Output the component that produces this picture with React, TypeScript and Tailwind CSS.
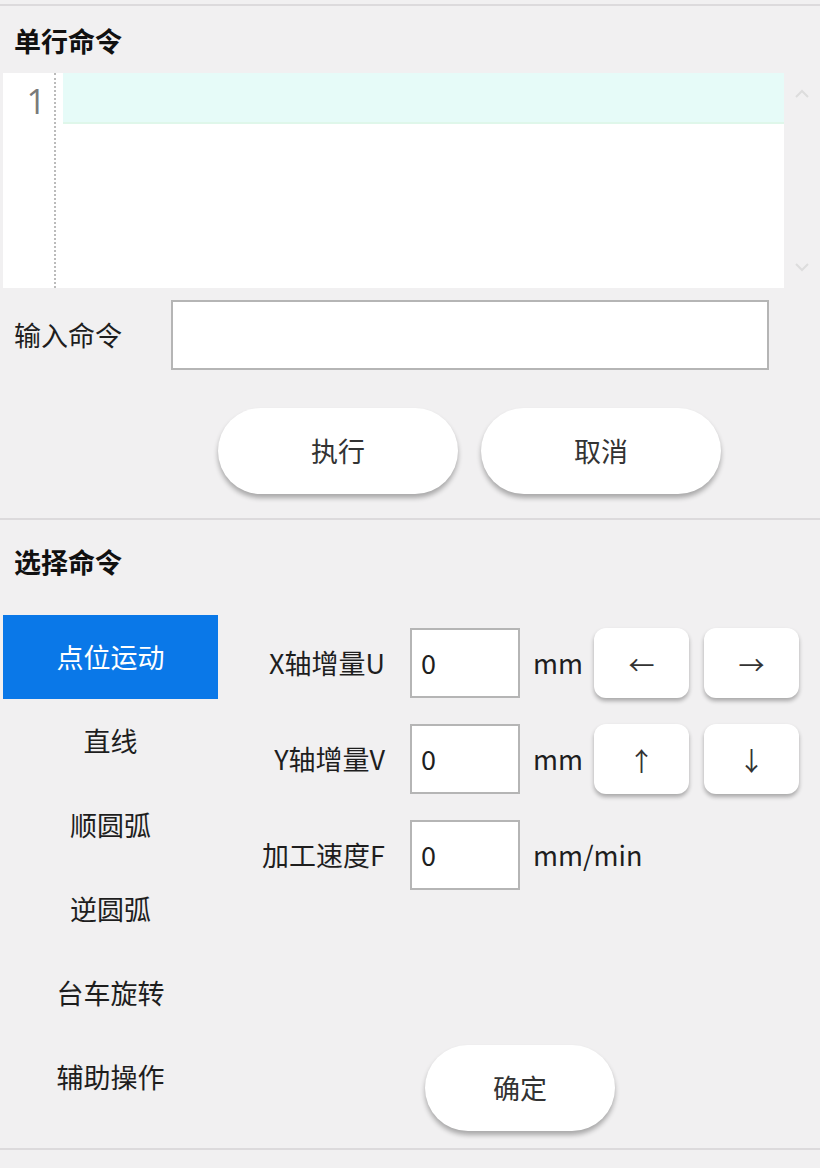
import React from 'react';

const font = { fontFamily: '"Noto Sans CJK SC", "Noto Sans", sans-serif' };

const menu = ['点位运动', '直线', '顺圆弧', '逆圆弧', '台车旋转', '辅助操作'];

function Field({ label, unit, children }: { label: string; unit: string; children?: React.ReactNode }) {
  return (
    <div className="flex items-center h-[70px]">
      <div className="w-[192px] text-right pr-[25px] text-[27px] text-[#1e1e1e] whitespace-nowrap">{label}</div>
      <div className="w-[110px] h-[70px] bg-white border-2 border-[#b5b5b5] flex items-center pl-[9px] text-[27px] text-[#1e1e1e]">0</div>
      <div className="pl-[13px] w-[74px] text-[27px] text-[#1e1e1e] whitespace-nowrap">{unit}</div>
      {children}
    </div>
  );
}

function ArrowBtn({ children }: { children: React.ReactNode }) {
  return (
    <button className="w-[95px] h-[70px] bg-white rounded-[12px] shadow-[0_3px_4px_rgba(0,0,0,0.3)] flex items-center justify-center text-[26px] text-[#333]">
      {children}
    </button>
  );
}

export default function App() {
  return (
    <div className="w-[820px] h-[1168px] bg-[#f1f0f1] overflow-hidden" style={font}>
      <div className="h-[6px] border-b-2 border-[#dcdadc]" />
      <div className="pl-[14px] h-[67px] flex items-center pt-[4px] text-[27px] font-bold text-[#111]">单行命令</div>

      <div className="flex">
        <div className="ml-[3px] w-[781px] h-[215px] bg-white flex">
          <div className="w-[53px] border-r-2 border-dotted border-[#bbb] flex justify-end pr-[8px] pt-[6px] text-[34px] leading-[44px] text-[#7a7a7a]" style={{ fontFamily: '"Open Sans", sans-serif' }}>1</div>
          <div className="flex-1 pl-[7px]">
            <div className="h-[51px] bg-[#e6fbf8] border-b-2 border-[#dff7ea]" />
          </div>
        </div>
        <div className="flex-1 flex flex-col items-center justify-between py-[16px] text-[#ddd]">
          <svg width="16" height="10" viewBox="0 0 16 10" fill="none" stroke="currentColor" strokeWidth="2"><path d="M2 8 L8 2 L14 8" /></svg>
          <svg width="16" height="10" viewBox="0 0 16 10" fill="none" stroke="currentColor" strokeWidth="2"><path d="M2 2 L8 8 L14 2" /></svg>
        </div>
      </div>

      <div className="flex items-center mt-[12px] h-[70px]">
        <div className="w-[171px] pl-[14px] text-[27px] text-[#1e1e1e]">输入命令</div>
        <div className="w-[598px] h-[70px] bg-white border-2 border-[#b5b5b5]" />
      </div>

      <div className="flex gap-[23px] pl-[218px] mt-[38px]">
        <button className="w-[240px] h-[86px] rounded-full bg-white shadow-[0_4px_5px_rgba(0,0,0,0.3)] text-[27px] text-[#333]">执行</button>
        <button className="w-[240px] h-[86px] rounded-full bg-white shadow-[0_4px_5px_rgba(0,0,0,0.3)] text-[27px] text-[#333]">取消</button>
      </div>

      <div className="mt-[24px] border-t-2 border-[#dcdadc]" />
      <div className="pl-[14px] h-[95px] flex items-center pb-[10px] text-[27px] font-bold text-[#111]">选择命令</div>

      <div className="flex">
        <div className="w-[215px] ml-[3px] flex flex-col">
          {menu.map((m, i) => (
            <div
              key={m}
              className={
                i === 0
                  ? 'h-[84px] flex items-center justify-center bg-[#0a78e8] text-white text-[27px]'
                  : 'h-[84px] flex items-center justify-center text-[#1e1e1e] text-[27px]'
              }
            >
              {m}
            </div>
          ))}
        </div>
        <div className="flex-1 flex flex-col pt-[13px]">
          <div className="flex flex-col gap-[26px]">
            <Field label="X轴增量U" unit="mm">
              <div className="flex gap-[15px]">
                <ArrowBtn>←</ArrowBtn>
                <ArrowBtn>→</ArrowBtn>
              </div>
            </Field>
            <Field label="Y轴增量V" unit="mm">
              <div className="flex gap-[15px]">
                <ArrowBtn>↑</ArrowBtn>
                <ArrowBtn>↓</ArrowBtn>
              </div>
            </Field>
            <Field label="加工速度F" unit="mm/min" />
          </div>
          <div className="mt-[155px] pl-[207px]">
            <button className="w-[190px] h-[86px] rounded-full bg-white shadow-[0_4px_5px_rgba(0,0,0,0.3)] text-[27px] text-[#333]">确定</button>
          </div>
        </div>
      </div>

      <div className="mt-[17px] border-t-2 border-[#dcdadc]" />
    </div>
  );
}
